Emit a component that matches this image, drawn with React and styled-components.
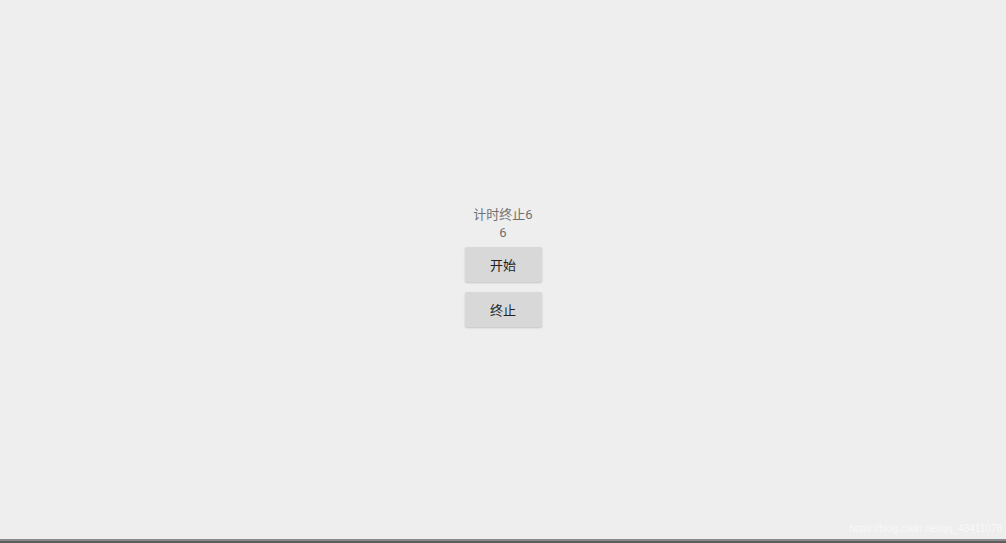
import React from "react";
import styled, { createGlobalStyle } from "styled-components";

const Global = createGlobalStyle`
  html, body { margin: 0; padding: 0; background: #eeeeee; }
  body { font-family: Roboto, "Noto Sans CJK SC", "Noto Sans", sans-serif; }
`;

const Page = styled.div`
  position: relative;
  width: 1006px;
  height: 543px;
  display: flex;
  flex-direction: column;
  background: #eeeeee;
  overflow: hidden;
`;

const Stage = styled.main`
  flex: 1;
  display: flex;
  flex-direction: column;
  align-items: center;
  padding-top: 206px;
`;

const Label = styled.div`
  font-size: 13px;
  line-height: 18px;
  color: #707070;
  text-align: center;
`;

const Buttons = styled.div`
  margin-top: 5px;
  display: flex;
  flex-direction: column;
  gap: 10px;
`;

const Button = styled.button`
  width: 77px;
  height: 35px;
  border: none;
  border-radius: 2px;
  background: #d8d8d8;
  color: #222;
  font-family: inherit;
  font-size: 13px;
  box-shadow: 0 1px 2px rgba(0, 0, 0, 0.18);
  cursor: pointer;
`;

const BottomBar = styled.div`
  height: 4px;
  border-top: 2px solid #8a8a8a;
  background: #5e5e5e;
  box-sizing: border-box;
`;

const Watermark = styled.div`
  position: absolute;
  right: 4px;
  bottom: 9px;
  font-size: 10px;
  color: #ffffff;
  opacity: 0.6;
  font-family: "Liberation Sans", Arial, sans-serif;
`;

export default function App() {
  return (
    <Page>
      <Global />
      <Stage>
        <Label>计时终止6</Label>
        <Label>6</Label>
        <Buttons>
          <Button>开始</Button>
          <Button>终止</Button>
        </Buttons>
      </Stage>
      <BottomBar />
      <Watermark>https://blog.csdn.net/qq_43411078</Watermark>
    </Page>
  );
}
